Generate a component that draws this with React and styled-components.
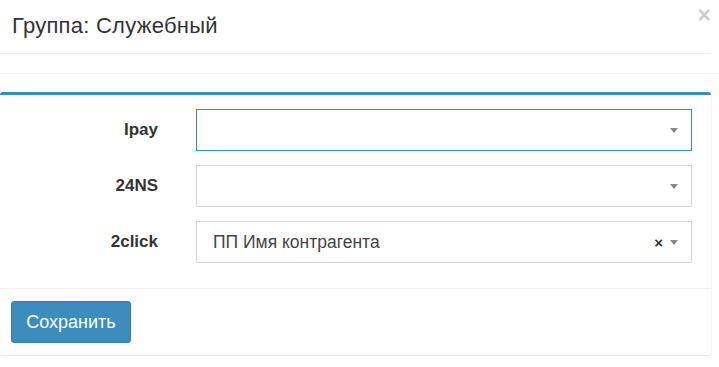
import React from 'react';
import styled, { createGlobalStyle } from 'styled-components';

const GlobalStyle = createGlobalStyle`
  html, body {
    margin: 0;
    padding: 0;
    background: #fff;
    font-family: "Liberation Sans", Arial, sans-serif;
    color: #333;
  }
`;

const Page = styled.div`
  width: 719px;
  height: 367px;
  overflow: hidden;
  background: #fff;
`;

const Header = styled.div`
  position: relative;
  width: 711px;
  height: 54px;
  box-sizing: border-box;
  padding: 0 0 2px 12px;
  display: flex;
  align-items: center;
  border-bottom: 1px solid #f0f0f0;
`;

const Title = styled.h4`
  margin: 0;
  font-size: 22px;
  font-weight: normal;
  color: #333;
  letter-spacing: 0.25px;
`;

const Close = styled.span`
  position: absolute;
  top: 3px;
  right: 0;
  font-size: 23px;
  line-height: 24px;
  font-weight: bold;
  color: #000;
  opacity: 0.2;
`;

const Spacer = styled.div`
  height: 19px;
  border-bottom: 1px solid #f0f0f0;
`;

const Box = styled.div`
  width: 711px;
  margin-top: 18px;
  border-top: 3px solid #3c8dbc;
  border-radius: 3px;
  box-shadow: 0 1px 1px rgba(0, 0, 0, 0.1), 1px 0 1px rgba(0, 0, 0, 0.03);
  background: #fff;
`;

const BoxBody = styled.div`
  padding: 14px 0 25px;
  display: flex;
  flex-direction: column;
  gap: 14px;
`;

const FormRow = styled.div`
  display: grid;
  grid-template-columns: 158px 496px;
  column-gap: 38px;
  align-items: center;
`;

const Label = styled.label`
  text-align: right;
  font-weight: bold;
  font-size: 17px;
  color: #333;
`;

const Select = styled.div`
  position: relative;
  height: 42px;
  box-sizing: border-box;
  border: 1px solid ${(p) => (p.$focused ? '#3c8dbc' : '#d2d6de')};
  display: flex;
  align-items: center;
  padding: 0 12px 0 16px;
  font-size: 17.5px;
  color: #444;
`;

const Value = styled.span`
  flex: 1;
`;

const Clear = styled.span`
  font-weight: bold;
  font-size: 15px;
  color: #333;
  margin-right: 7px;
`;

const Arrow = styled.span`
  width: 0;
  height: 0;
  border-style: solid;
  border-width: 5px 4px 0 4px;
  border-color: #888 transparent transparent transparent;
  margin-right: 1px;
`;

const BoxFooter = styled.div`
  border-top: 1px solid #f0f0f0;
  padding: 12px 11px;
`;

const Button = styled.button`
  width: 120px;
  height: 42px;
  background: #3c8dbc;
  border: 1px solid #367fa9;
  border-radius: 3px;
  color: #fff;
  font-family: "Liberation Sans", Arial, sans-serif;
  font-size: 18px;
  padding: 0;
  cursor: pointer;
`;

const fields = [
  { label: 'Ipay', value: '', focused: true },
  { label: '24NS', value: '' },
  { label: '2click', value: 'ПП Имя контрагента' },
];

export default function App() {
  return (
    <Page>
      <GlobalStyle />
      <Header>
        <Title>Группа: Служебный</Title>
        <Close>×</Close>
      </Header>
      <Spacer />
      <Box>
        <BoxBody>
          {fields.map((f) => (
            <FormRow key={f.label}>
              <Label>{f.label}</Label>
              <Select $focused={f.focused}>
                <Value>{f.value}</Value>
                {f.value && <Clear>×</Clear>}
                <Arrow />
              </Select>
            </FormRow>
          ))}
        </BoxBody>
        <BoxFooter>
          <Button>Сохранить</Button>
        </BoxFooter>
      </Box>
    </Page>
  );
}
